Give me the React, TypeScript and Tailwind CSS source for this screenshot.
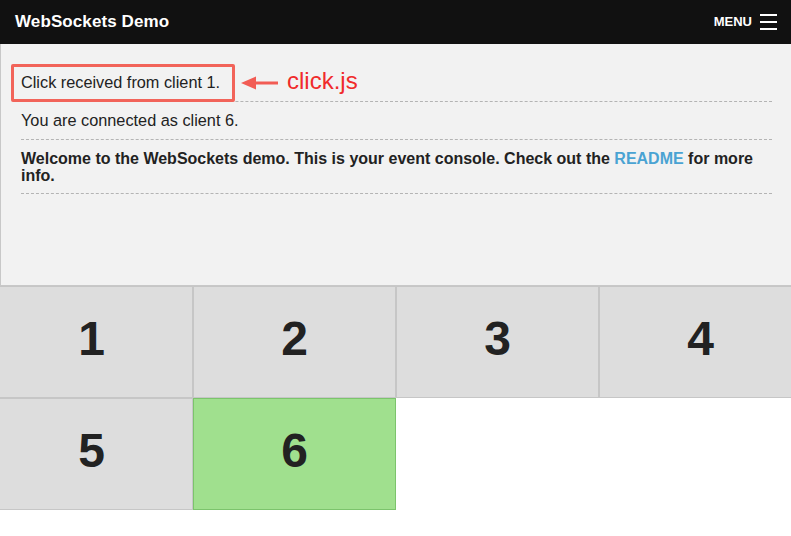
import React from 'react'

const messages = [
  { text: 'Click received from client 1.', highlight: true },
  { text: 'You are connected as client 6.' },
]

const Tile = ({ n, active }: { n: number; active?: boolean }) => (
  <div
    className={
      active
        ? 'flex items-center justify-center h-[112px] pb-[6px] border border-[#7cc46c] bg-[#a0e08e] text-[48px] font-bold text-[#222]'
        : 'flex items-center justify-center h-[112px] pb-[6px] border border-[#c6c6c6] bg-[#dddddd] text-[48px] font-bold text-[#222]'
    }
  >
    {n}
  </div>
)

const App = () => {
  return (
    <div className="w-[791px] h-[536px] overflow-hidden bg-white font-['Liberation_Sans',Arial,sans-serif] text-[#222]">
      <header className="flex items-center justify-between h-[44px] bg-[#111111] pl-[15px] pr-[14px]">
        <h1 className="text-[17px] font-bold text-white tracking-[0.1px]">WebSockets Demo</h1>
        <div className="flex items-center gap-[8px]">
          <span className="text-[13px] font-bold text-white">MENU</span>
          <div className="flex flex-col gap-[5px] w-[17px]">
            <span className="block h-[2px] bg-white" />
            <span className="block h-[2px] bg-white" />
            <span className="block h-[2px] bg-white" />
          </div>
        </div>
      </header>

      <section className="h-[242px] bg-[#f2f2f2] border-l border-b border-[#c8c8c8] pt-[20px] pl-[20px] pr-[19px]">
        <ul>
          {messages.map((m) => (
            <li
              key={m.text}
              className="relative border-b border-dashed border-[#b4b4b4] pt-[10px] pb-[10px] text-[16.3px] leading-[17px]"
            >
              {m.text}
              {m.highlight && (
                <>
                  <span className="absolute left-[-10px] top-0 w-[224px] h-[38px] border-[3px] border-[#f2645a] rounded-[2px]" />
                  <span className="absolute left-[220px] top-[10px] flex items-center gap-[9px]">
                    <svg width="37" height="14" viewBox="0 0 37 14">
                      <polygon points="0,7 15,0.5 15,13.5" fill="#f25c54" />
                      <rect x="13" y="5.5" width="24" height="3" fill="#f25c54" />
                    </svg>
                    <span className="text-[24px] leading-[20px] text-[#f02b2b] -mt-[3px]">click.js</span>
                  </span>
                </>
              )}
            </li>
          ))}
          <li className="border-b border-dashed border-[#b4b4b4] pt-[10px] pb-[9px] text-[16px] leading-[17px] font-bold">
            Welcome to the WebSockets demo. This is your event console. Check out the{' '}
            <a href="#" className="text-[#4aa3d3]">README</a> for more info.
          </li>
        </ul>
      </section>

      <div className="grid grid-cols-[repeat(4,203px)] -ml-[10px]">
        <Tile n={1} />
        <Tile n={2} />
        <Tile n={3} />
        <Tile n={4} />
        <Tile n={5} />
        <Tile n={6} active />
      </div>
    </div>
  )
}

export default App
